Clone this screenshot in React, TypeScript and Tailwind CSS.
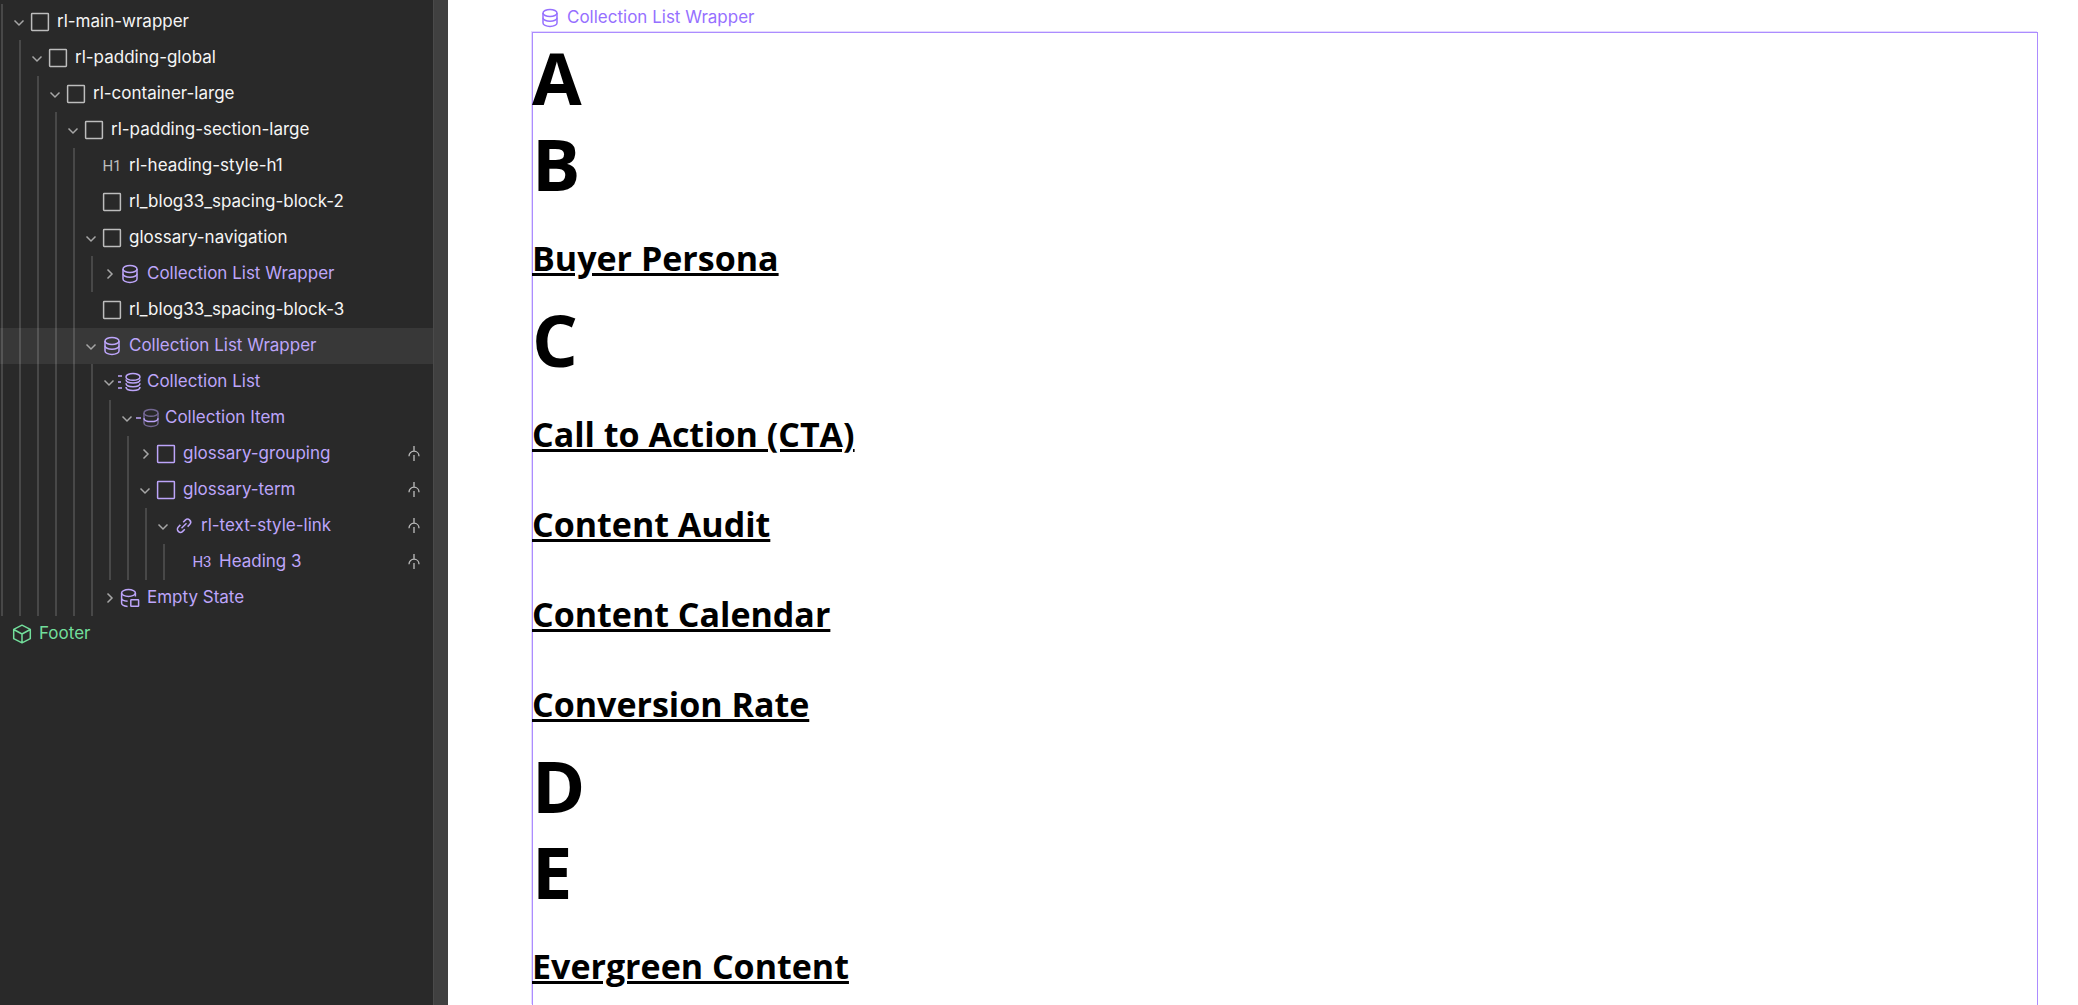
import type { ReactNode } from "react";
import clsx from "clsx";

type IconName = "box" | "h1" | "h3" | "database" | "list" | "item" | "empty" | "link" | "component";

type TreeNode = {
  label: string;
  depth: number;
  icon: IconName;
  tone?: "plain" | "collection";
  state?: "open" | "closed";
  selected?: boolean;
  conditional?: boolean;
};

const nodes: TreeNode[] = [
  { label: "rl-main-wrapper", depth: 0, icon: "box", state: "open" },
  { label: "rl-padding-global", depth: 1, icon: "box", state: "open" },
  { label: "rl-container-large", depth: 2, icon: "box", state: "open" },
  { label: "rl-padding-section-large", depth: 3, icon: "box", state: "open" },
  { label: "rl-heading-style-h1", depth: 4, icon: "h1" },
  { label: "rl_blog33_spacing-block-2", depth: 4, icon: "box" },
  { label: "glossary-navigation", depth: 4, icon: "box", state: "open" },
  { label: "Collection List Wrapper", depth: 5, icon: "database", tone: "collection", state: "closed" },
  { label: "rl_blog33_spacing-block-3", depth: 4, icon: "box" },
  { label: "Collection List Wrapper", depth: 4, icon: "database", tone: "collection", state: "open", selected: true },
  { label: "Collection List", depth: 5, icon: "list", tone: "collection", state: "open" },
  { label: "Collection Item", depth: 6, icon: "item", tone: "collection", state: "open" },
  { label: "glossary-grouping", depth: 7, icon: "box", tone: "collection", state: "closed", conditional: true },
  { label: "glossary-term", depth: 7, icon: "box", tone: "collection", state: "open", conditional: true },
  { label: "rl-text-style-link", depth: 8, icon: "link", tone: "collection", state: "open", conditional: true },
  { label: "Heading 3", depth: 9, icon: "h3", tone: "collection", conditional: true },
  { label: "Empty State", depth: 5, icon: "empty", tone: "collection", state: "closed" },
];

const glossary = [
  { letter: "A", terms: [] },
  { letter: "B", terms: ["Buyer Persona"] },
  { letter: "C", terms: ["Call to Action (CTA)", "Content Audit", "Content Calendar", "Conversion Rate"] },
  { letter: "D", terms: [] },
  { letter: "E", terms: ["Evergreen Content"] },
];

const Svg = ({ children }: { children: ReactNode }) => (
  <svg
    className="overflow-visible"
    width="22"
    height="20"
    viewBox="0 0 22 20"
    fill="none"
    stroke="currentColor"
    strokeWidth="1.5"
    aria-hidden="true"
  >
    {children}
  </svg>
);

const NodeIcon = ({ name }: { name: IconName }) => {
  switch (name) {
    case "h1":
      return <span className="font-[Roboto] text-[15px]">H1</span>;
    case "h3":
      return <span className="font-[Roboto] text-[15px]">H3</span>;
    case "box":
      return (
        <Svg>
          <rect x="2.6" y="1.6" width="16.8" height="16.8" rx="0.6" />
        </Svg>
      );
    case "database":
      return (
        <Svg>
          <ellipse cx="11" cy="5" rx="7" ry="3.5" />
          <path d="M4 5v10c0 1.9 3.1 3.4 7 3.4s7-1.5 7-3.4V5" />
          <path d="M4 9.8c0 1.9 3.1 3.4 7 3.4s7-1.5 7-3.4" />
        </Svg>
      );
    case "list":
      return (
        <Svg>
          <path d="M-1 4h4M-1 10h3M-1 16h4" />
          <ellipse cx="14" cy="4.9" rx="7" ry="3.4" />
          <path d="M7 7.4c0 2.1 3 3.5 7 3.5s7-1.4 7-3.5" />
          <path d="M7 11.2c0 2.1 3 3.5 7 3.5s7-1.4 7-3.5" />
          <path d="M7 15c0 2.1 3 3.5 7 3.5s7-1.4 7-3.5" />
        </Svg>
      );
    case "item":
      return (
        <Svg>
          <path d="M-1 10h5" />
          <g opacity="0.5">
            <ellipse cx="14" cy="4.9" rx="7" ry="3.4" />
            <path d="M7 4.9V15c0 1.9 3 3.4 7 3.4s7-1.5 7-3.4V4.9" />
          </g>
          <path d="M7 10.2c0 2 3 3.4 7 3.4s7-1.4 7-3.4" />
        </Svg>
      );
    case "empty":
      return (
        <Svg>
          <ellipse cx="9.5" cy="5" rx="6.9" ry="3.4" />
          <path d="M2.6 5v10c0 1.7 2.4 3.1 6 3.4M16.4 5v3.6M2.6 10c0 1.7 2.4 3 6 3.3" />
          <rect x="11.8" y="11.8" width="7.8" height="6.5" rx="0.6" />
        </Svg>
      );
    case "link":
      return (
        <Svg>
          <path d="M10.2 6.2l2.1-2.1a3.1 3.1 0 0 1 4.4 4.4l-2.1 2.1" />
          <path d="M11.8 13.3l-2.1 2.1a3.1 3.1 0 0 1-4.4-4.4l2.1-2.1" />
          <path d="M8.5 12.2l5-5" />
        </Svg>
      );
    case "component":
      return (
        <Svg>
          <path d="M11 1.2l8.3 4.1v9.4L11 18.8l-8.3-4.1V5.3zM2.7 5.5L11 10l8.3-4.5M11 10v8.6" strokeLinejoin="round" />
        </Svg>
      );
  }
};

const Chevron = ({ open }: { open: boolean }) => (
  <svg width="12" height="12" viewBox="0 0 12 12" fill="none" stroke="currentColor" strokeWidth="1.5" aria-hidden="true">
    {open ? <path d="M1.5 4.5L6 9l4.5-4.5" /> : <path d="M4.5 1.5L9 6l-4.5 4.5" />}
  </svg>
);

const ConditionalMark = () => (
  <svg
    className="mr-3 ml-auto text-[#bdbdbd]"
    width="14"
    height="16"
    viewBox="0 0 14 16"
    fill="none"
    stroke="currentColor"
    strokeWidth="1.3"
    aria-hidden="true"
  >
    <path d="M7 0v5M2 10.2C2 7.4 4.2 5.2 7 5.2s5 2.2 5 5M7 9v6" />
  </svg>
);

const TreeRow = ({ node }: { node: TreeNode }) => {
  const collection = node.tone === "collection";

  return (
    <li className={clsx("flex h-9 items-center", node.selected && "bg-[#383838]")}>
      {/* Indent guides */}
      <span className="flex self-stretch pl-px">
        {Array.from({ length: node.depth }, (_, i) => (
          <span key={i} className="w-[18px] border-l-2 border-white/15" />
        ))}
        <span className="w-2 border-l-2 border-white/15" />
      </span>
      <span className="flex w-5 justify-center text-[#a6a6a6]">
        {node.state && (
          <button type="button" aria-label={`Toggle ${node.label}`} aria-expanded={node.state === "open"}>
            <Chevron open={node.state === "open"} />
          </button>
        )}
      </span>
      <span
        className={clsx(
          "flex w-[22px] shrink-0 justify-center",
          collection ? "text-[#bda5fa]" : "text-[#bdbdbd]"
        )}
      >
        <NodeIcon name={node.icon} />
      </span>
      <span className={clsx("ml-1.5 whitespace-nowrap", collection ? "text-[#bda5fa]" : "text-[#f5f5f5]")}>
        {node.label}
      </span>
      {node.conditional && <ConditionalMark />}
    </li>
  );
};

const Navigator = () => (
  <aside className="flex w-[448px] shrink-0 bg-[#292929] font-[Inter,sans-serif] text-[17px]">
    <ul className="flex-1 pt-1">
      {nodes.map((node, i) => (
        <TreeRow key={i} node={node} />
      ))}
      <li className="flex h-9 items-center pl-[11px] text-[#72de9b]">
        <NodeIcon name="component" />
        <span className="ml-1.5">Footer</span>
      </li>
    </ul>
    {/* Scrollbar gutter */}
    <div className="w-[15px] border-l border-[#4a4a4a] bg-[#404040]" />
  </aside>
);

const Canvas = () => (
  <main className="flex flex-1 flex-col bg-white pr-10 pl-[84px]">
    <div className="flex h-8 items-center gap-1.5 pt-1 pl-[7px] font-[Inter,sans-serif] text-[17px] text-[#9670ff]">
      <NodeIcon name="database" />
      <span>Collection List Wrapper</span>
    </div>
    {/* Selection outline around the collection list */}
    <div className="flex-1 border border-b-0 border-[#ac8cff] pt-px font-['Open_Sans',sans-serif] text-black shadow-[-1px_-1px_0_#e4daff]">
      {glossary.map((group) => (
        <section key={group.letter} className="-ml-px">
          <h2 className="text-7xl/[86px] font-bold">{group.letter}</h2>
          {group.terms.map((term) => (
            <h3 key={term} className="pt-8 pb-[18px] text-[34px]/[40px] font-bold">
              <a href="#" className="underline decoration-3 underline-offset-2">
                {term}
              </a>
            </h3>
          ))}
        </section>
      ))}
    </div>
  </main>
);

const App = () => (
  <div className="flex min-h-screen">
    <Navigator />
    <Canvas />
  </div>
);

export default App;
